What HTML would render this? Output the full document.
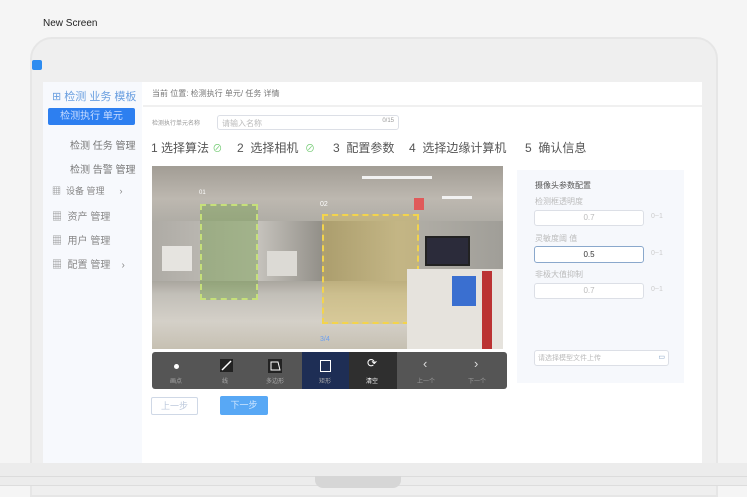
<!DOCTYPE html>
<html><head><meta charset="utf-8"><style>
*{margin:0;padding:0;box-sizing:border-box}
body{width:747px;height:486px;overflow:hidden;background:#f5f5f5;font-family:"Liberation Sans","Noto Sans CJK SC",sans-serif;position:relative;color:#555}
.a{position:absolute}
.frame{left:30px;top:37px;width:688px;height:460px;border:2px solid #e6e6e6;border-radius:22px 22px 0 0;background:#efefef}
.t{white-space:nowrap}
.inp{border:1px solid #dcdfe6;border-radius:3px;background:#fff;font-size:8px;color:#bbb}
.st{font-size:12px;color:#555}
.ck{color:#7c7;font-size:10px}
</style></head><body>
<div class="a t" style="left:43px;top:18px;font-size:10px;color:#222">New Screen</div>
<div class="a frame"></div>
<div class="a" style="left:32px;top:60px;width:10px;height:10px;background:#2d8cf0;border-radius:2px"></div>
<div class="a" style="left:43px;top:82px;width:659px;height:383px;background:#fff"></div>
<div class="a" style="left:43px;top:82px;width:99px;height:383px;background:#f7f9fd"></div>
<div class="a t" style="left:52px;top:88px;font-size:11px;color:#6a9fe0">⊞ 检测 业务 模板</div>
<div class="a t" style="left:48px;top:108px;width:87px;height:17px;background:#2d7ff0;border-radius:2px;color:#c8dcff;font-size:10px;text-align:center;line-height:17px">检测执行 单元</div>
<div class="a t" style="left:70px;top:137px;font-size:10px;color:#777">检测 任务 管理</div>
<div class="a t" style="left:70px;top:161px;font-size:10px;color:#777">检测 告警 管理</div>
<div class="a t" style="left:52px;top:184px;font-size:9px;color:#888">▦ &nbsp;设备 管理 &nbsp;&nbsp;&nbsp;&nbsp;&nbsp;›</div>
<div class="a t" style="left:52px;top:208px;font-size:10px;color:#888">▦ &nbsp;资产 管理</div>
<div class="a t" style="left:52px;top:232px;font-size:10px;color:#888">▦ &nbsp;用户 管理</div>
<div class="a t" style="left:52px;top:256px;font-size:10px;color:#888">▦ &nbsp;配置 管理 &nbsp;&nbsp;&nbsp;›</div>
<div class="a" style="left:143px;top:82px;width:559px;height:25px;border-bottom:2px solid #f0f0f0"></div>
<div class="a t" style="left:152px;top:88px;font-size:8px;color:#777">当前 位置: 检测执行 单元/ 任务 详情</div>
<div class="a t" style="left:152px;top:118px;font-size:6px;color:#999">检测执行单元名称</div>
<div class="a inp" style="left:217px;top:115px;width:182px;height:15px;padding:2px 4px">请输入名称<span style="float:right;font-size:6px;color:#999">0/15</span></div>
<div class="a t st" style="left:151px;top:139px">1 选择算法 <span class="ck">⊘</span></div>
<div class="a t st" style="left:237px;top:139px">2 &nbsp;选择相机 &nbsp;<span class="ck">⊘</span></div>
<div class="a t st" style="left:333px;top:139px">3 &nbsp;配置参数</div>
<div class="a t st" style="left:409px;top:139px">4 &nbsp;选择边缘计算机</div>
<div class="a t st" style="left:525px;top:139px">5 &nbsp;确认信息</div>
<div class="a" style="left:152px;top:166px;width:351px;height:183px;overflow:hidden;background:linear-gradient(#a29d95 0%,#bdb8b0 18%,#b0ada6 30%,#8a867e 45%,#99958d 58%,#c2bfb8 70%,#d4d0c8 85%,#c6c0b2 100%)">
 <div class="a" style="left:0;top:55px;width:351px;height:60px;background:linear-gradient(90deg,#aeaba5,#c6c3bd 30%,#8e8b84 50%,#b3b0a8 70%,#a09e98)"></div>
 <div class="a" style="left:10px;top:80px;width:30px;height:25px;background:#e6e4e0"></div>
 <div class="a" style="left:115px;top:85px;width:30px;height:25px;background:#dcdad5"></div>
 <div class="a" style="left:210px;top:10px;width:70px;height:3px;background:#f2f2f2"></div>
 <div class="a" style="left:290px;top:30px;width:30px;height:3px;background:#f2f2f2"></div>
 <div class="a" style="left:48px;top:38px;width:58px;height:96px;border:2px dashed #c6e07a;background:rgba(120,160,80,.45)"></div>
 <div class="a t" style="left:47px;top:24px;font-size:6px;color:#fff">01</div>
 <div class="a t" style="left:168px;top:35px;font-size:7px;color:#fff">02</div>
 <div class="a" style="left:170px;top:48px;width:97px;height:110px;border:2px dashed #f3d44c;background:rgba(220,190,80,.4)"></div>
 <div class="a" style="left:262px;top:32px;width:10px;height:12px;background:#e05a5a"></div>
 <div class="a" style="left:273px;top:70px;width:45px;height:30px;background:#2b2b3a;border:2px solid #222"></div>
 <div class="a" style="left:255px;top:103px;width:96px;height:80px;background:#e6e3dd"></div>
 <div class="a" style="left:300px;top:110px;width:24px;height:30px;background:#3a6fd0"></div>
 <div class="a" style="left:330px;top:105px;width:10px;height:78px;background:#b33"></div>
 <div class="a t" style="left:168px;top:170px;font-size:7px;color:#6b9ff0">3/4</div>
</div>
<div class="a" style="left:152px;top:352px;width:355px;height:37px;background:#555;border-radius:3px"></div>
<div class="a" style="left:302px;top:352px;width:47px;height:37px;background:#1e2e55"></div>
<div class="a" style="left:349px;top:352px;width:48px;height:37px;background:#2f2f2f"></div>
<div class="a" style="left:174px;top:364px;width:5px;height:5px;background:#fff;border-radius:50%"></div>
<div class="a" style="left:220px;top:359px;width:13px;height:13px;background:#222"><svg width="13" height="13"><path d="M2 11L11 2" stroke="#fff" stroke-width="1.5"/></svg></div>
<div class="a" style="left:268px;top:359px;width:14px;height:14px;background:#222"><svg width="14" height="14"><path d="M3 3L10 3L12 11L3 11Z" stroke="#fff" fill="none"/></svg></div>
<div class="a" style="left:320px;top:360px;width:11px;height:12px;border:1px solid #fff"></div>
<div class="a t" style="left:367px;top:356px;font-size:12px;color:#fff">⟳</div>
<div class="a t" style="left:423px;top:356px;font-size:13px;color:#ddd">‹</div>
<div class="a t" style="left:474px;top:356px;font-size:13px;color:#ddd">›</div>
<div class="a t" style="left:170px;top:376px;font-size:6px;color:#aaa">画点</div>
<div class="a t" style="left:222px;top:376px;font-size:6px;color:#aaa">线</div>
<div class="a t" style="left:266px;top:376px;font-size:6px;color:#aaa">多边形</div>
<div class="a t" style="left:319px;top:376px;font-size:6px;color:#aaa">矩形</div>
<div class="a t" style="left:366px;top:376px;font-size:6px;color:#fff">清空</div>
<div class="a t" style="left:417px;top:376px;font-size:6px;color:#999">上一个</div>
<div class="a t" style="left:468px;top:376px;font-size:6px;color:#999">下一个</div>
<div class="a t" style="left:151px;top:397px;width:47px;height:18px;border:1px solid #cfd8e6;border-radius:2px;font-size:9px;color:#bcc8dc;text-align:center;line-height:16px">上一步</div>
<div class="a t" style="left:220px;top:396px;width:48px;height:19px;background:#58a8f5;border-radius:2px;font-size:9px;color:#cfe6ff;text-align:center;line-height:19px">下一步</div>
<div class="a" style="left:517px;top:170px;width:167px;height:213px;background:#f6f8fc"></div>
<div class="a t" style="left:535px;top:180px;font-size:8px;color:#555">摄像头参数配置</div>
<div class="a t" style="left:535px;top:196px;font-size:8px;color:#bbb">检测框透明度</div>
<div class="a inp" style="left:534px;top:210px;width:110px;height:16px;text-align:center;line-height:14px">0.7</div>
<div class="a t" style="left:651px;top:213px;font-size:7px;color:#ccc">0~1</div>
<div class="a t" style="left:535px;top:233px;font-size:8px;color:#bbb">灵敏度阈 值</div>
<div class="a inp" style="left:534px;top:246px;width:110px;height:17px;text-align:center;line-height:15px;border-color:#8aa8cc;color:#333">0.5</div>
<div class="a t" style="left:651px;top:250px;font-size:7px;color:#ccc">0~1</div>
<div class="a t" style="left:535px;top:269px;font-size:8px;color:#bbb">非极大值抑制</div>
<div class="a inp" style="left:534px;top:283px;width:110px;height:16px;text-align:center;line-height:14px">0.7</div>
<div class="a t" style="left:651px;top:286px;font-size:7px;color:#ccc">0~1</div>
<div class="a inp" style="left:534px;top:350px;width:135px;height:16px;padding:2px 3px;font-size:7px">请选择模型文件上传<span style="float:right;color:#7a9bc0">▭</span></div>
<div class="a" style="left:0;top:463px;width:747px;height:23px;background:#ececec;border-bottom:1px solid #ddd"></div>
<div class="a" style="left:0;top:476px;width:747px;height:1px;background:#dcdcdc"></div>
<div class="a" style="left:315px;top:476px;width:86px;height:12px;background:#d6d6d6;border-radius:0 0 8px 8px"></div>
</body></html>
